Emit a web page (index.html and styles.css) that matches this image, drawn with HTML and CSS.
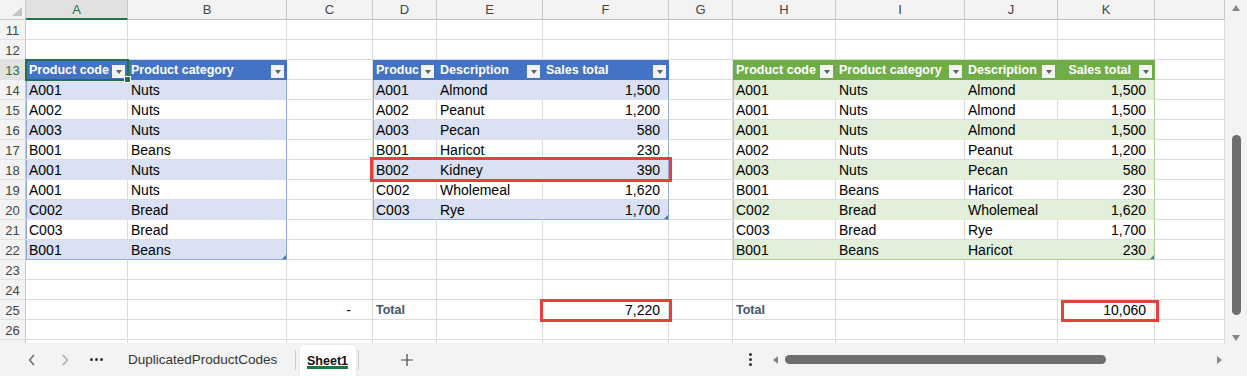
FILE: index.html
```html
<!DOCTYPE html>
<html lang="en">
<head>
  <meta charset="UTF-8" />
  <title>Sheet1 - Excel</title>
  <link rel="stylesheet" href="styles.css">
</head>
<body>
  <div class="app">
    <div class="main">
      <div class="sheet" id="sheet"></div>
      <div class="vscroll">
        <span class="arrow-up"></span>
        <span class="vthumb"></span>
        <span class="arrow-down"></span>
      </div>
    </div>

    <div class="tabbar">
      <span class="nav nav-prev"><svg width="8" height="12" viewBox="0 0 8 12"><path d="M6 1 1.5 6 6 11" /></svg></span>
      <span class="nav nav-next"><svg width="8" height="12" viewBox="0 0 8 12"><path d="M2 1 6.5 6 2 11" /></svg></span>
      <span class="more"><i></i><i></i><i></i></span>
      <span class="tab">DuplicatedProductCodes</span>
      <span class="tab-sep"></span>
      <span class="tab-active"><span class="tab-label">Sheet1</span><span class="tab-line"></span></span>
      <span class="tab-sep"></span>
      <span class="add"><svg width="12" height="12" viewBox="0 0 12 12"><path d="M6 0v12M0 6h12" /></svg></span>
      <span class="kebab"><i></i><i></i><i></i></span>
      <div class="hscroll">
        <span class="arrow-left"></span>
        <span class="hthumb"></span>
        <span class="arrow-right"></span>
      </div>
    </div>
  </div>

  <script>
    // column letters, index 0 is the row header column
    const letters = ['', 'A', 'B', 'C', 'D', 'E', 'F', 'G', 'H', 'I', 'J', 'K', ''];
    const firstRow = 11, lastRow = 27;

    const tables = [
      {
        tone: 'blue', col: 1,
        heads: ['Product code', 'Product category'],
        rows: [
          ['A001', 'Nuts'], ['A002', 'Nuts'], ['A003', 'Nuts'], ['B001', 'Beans'], ['A001', 'Nuts'],
          ['A001', 'Nuts'], ['C002', 'Bread'], ['C003', 'Bread'], ['B001', 'Beans']
        ]
      },
      {
        tone: 'blue', col: 4, numCol: 2,
        heads: ['Product code', 'Description', 'Sales total'],
        rows: [
          ['A001', 'Almond', '1,500'], ['A002', 'Peanut', '1,200'], ['A003', 'Pecan', '580'],
          ['B001', 'Haricot', '230'], ['B002', 'Kidney', '390'], ['C002', 'Wholemeal', '1,620'],
          ['C003', 'Rye', '1,700']
        ]
      },
      {
        tone: 'green', col: 8, numCol: 3, rightHead: 3,
        heads: ['Product code', 'Product category', 'Description', 'Sales total'],
        rows: [
          ['A001', 'Nuts', 'Almond', '1,500'], ['A001', 'Nuts', 'Almond', '1,500'],
          ['A001', 'Nuts', 'Almond', '1,500'], ['A002', 'Nuts', 'Peanut', '1,200'],
          ['A003', 'Nuts', 'Pecan', '580'], ['B001', 'Beans', 'Haricot', '230'],
          ['C002', 'Bread', 'Wholemeal', '1,620'], ['C003', 'Bread', 'Rye', '1,700'],
          ['B001', 'Beans', 'Haricot', '230']
        ]
      }
    ];

    const cells = {};
    function put(row, col, info) {
      cells[row + ':' + col] = info;
    }

    tables.forEach(t => {
      const lastCol = t.col + t.heads.length - 1;
      t.heads.forEach((h, i) => {
        put(13, t.col + i, { head: h, cls: t.tone + ' th' + (i === t.rightHead ? ' th-right' : '') });
      });
      t.rows.forEach((r, ri) => {
        r.forEach((v, i) => {
          const col = t.col + i;
          let cls = t.tone;
          if (ri % 2 === 0) cls += ' band';
          if (i === t.numCol) cls += ' num';
          if (i === 0) cls += ' edge-l';
          if (col === lastCol) cls += ' edge-r';
          if (ri === t.rows.length - 1) {
            cls += ' edge-b';
            if (col === lastCol) cls += ' rz';
          }
          put(14 + ri, col, { text: v, cls: cls });
        });
      });
    });

    // extras outside the tables
    cells['13:1'].cls += ' active';
    cells['18:4'].box = 'hl-row';
    put(25, 3, { text: '-', cls: 'dash' });
    put(25, 4, { text: 'Total', cls: 'total' });
    put(25, 6, { text: '7,220', cls: 'num', box: 'hl-f' });
    put(25, 8, { text: 'Total', cls: 'total' });
    put(25, 11, { text: '10,060', cls: 'num', box: 'hl-k' });

    const sheet = document.getElementById('sheet');

    letters.forEach((l, c) => {
      const d = document.createElement('div');
      d.className = c === 0 ? 'cell corner' : 'cell ch' + (c === 1 ? ' sel' : '');
      d.textContent = l;
      sheet.appendChild(d);
    });

    for (let r = firstRow; r <= lastRow; r++) {
      for (let c = 0; c < letters.length; c++) {
        const d = document.createElement('div');
        if (c === 0) {
          d.className = 'cell rh' + (r === 13 ? ' sel' : '');
          // last row is only a sliver, no label shows
          d.textContent = r < lastRow ? r : '';
        } else {
          const info = cells[r + ':' + c];
          d.className = 'cell' + (info ? ' ' + info.cls : '');
          if (info && info.head) {
            const txt = document.createElement('span');
            txt.className = 'txt';
            txt.textContent = info.head;
            const dd = document.createElement('span');
            dd.className = 'dd';
            d.append(txt, dd);
          } else if (info) {
            d.textContent = info.text;
          }
          if (info && info.box) {
            const b = document.createElement('span');
            b.className = 'hl ' + info.box;
            d.classList.add('boxed');
            d.appendChild(b);
          }
        }
        sheet.appendChild(d);
      }
    }
  </script>
</body>
</html>
```

FILE: styles.css
```css
body {
  margin: 0;
  font-family: "Liberation Sans", Arial, sans-serif;
  background-color: #fff;
  overflow: hidden;
}
.app {
  width: 1247px;
  height: 376px;
  display: flex;
  flex-direction: column;
}
.main {
  display: flex;
  height: 343px;
}

/* grid */
.sheet {
  width: 1225px;
  height: 343px;
  overflow: hidden;
  display: grid;
  grid-template-columns: 26px 102px 159px 86px 64px 106px 126px 64px 103px 129px 93px 97px 70px;
  grid-auto-rows: 20px;
}
.cell {
  position: relative;
  box-sizing: border-box;
  border-right: 1px solid #dcdcdc;
  border-bottom: 1px solid #dcdcdc;
  padding: 2px 3px 0;
  line-height: 17px;
  font-size: 14px;
  white-space: nowrap;
  color: #000;
}
.corner {
  background-color: #f3f3f3;
  border-right-color: #c8c8c8;
  border-bottom-color: #c8c8c8;
}
.corner::after {
  content: '';
  position: absolute;
  right: 3px;
  bottom: 3px;
  border-left: 10px solid transparent;
  border-bottom: 9px solid #c4c4c4;
}
.ch {
  background-color: #f3f3f3;
  border-right-color: #c8c8c8;
  border-bottom-color: #c2c2c2;
  text-align: center;
  font-size: 13px;
  line-height: 15px;
  color: #444;
}
.ch.sel {
  background-color: #e1e1e1;
  color: #217346;
  border-bottom: 2px solid #217346;
}
.rh {
  background-color: #f3f3f3;
  border-right-color: #c8c8c8;
  border-bottom-color: #e1e1e1;
  text-align: center;
  font-size: 13px;
  color: #444;
  padding: 2px 0 0;
}
.rh.sel {
  background-color: #e1e1e1;
  color: #217346;
}

/* tables */
.th {
  display: flex;
  align-items: flex-start;
  padding-right: 2px;
  font-weight: bold;
  font-size: 12.5px;
  color: #fff;
}
.th .txt {
  flex: 1;
  min-width: 0;
  overflow: hidden;
}
.th-right .txt {
  text-align: right;
  margin-right: 6px;
}
.dd {
  flex-shrink: 0;
  width: 13px;
  height: 13px;
  margin-top: 3px;
  margin-left: 2px;
  background-color: #f3f3f3;
  display: flex;
  align-items: center;
  justify-content: center;
}
.dd::after {
  content: '';
  border-left: 3.5px solid transparent;
  border-right: 3.5px solid transparent;
  border-top: 4px solid #5f5f5f;
}
.blue.th {
  background-color: #4472c4;
  border-right-color: #4472c4;
  border-bottom-color: #4472c4;
}
.green.th {
  background-color: #70ad47;
  border-right-color: #70ad47;
  border-bottom-color: #70ad47;
}
.blue.band {
  background-color: #d9e1f2;
  border-right-color: #d9e1f2;
  border-bottom-color: #d9e1f2;
}
.green.band {
  background-color: #e2efda;
  border-right-color: #e2efda;
  border-bottom-color: #e2efda;
}
.blue.edge-r { border-right-color: #8ea9db; }
.blue.edge-b { border-bottom-color: #8ea9db; }
.blue.edge-l { box-shadow: inset 1px 0 #8ea9db; }
.green.edge-r { border-right-color: #a9d08e; }
.green.edge-b { border-bottom-color: #a9d08e; }
.green.edge-l { box-shadow: inset 1px 0 #a9d08e; }
.rz::after {
  content: '';
  position: absolute;
  right: 0;
  bottom: 0;
  border-left: 4px solid transparent;
  border-bottom: 4px solid #4472c4;
}

.num {
  text-align: right;
  padding-right: 8px;
}
.dash {
  text-align: right;
  padding-right: 21px;
}
.total {
  font-weight: bold;
  font-size: 12.5px;
  color: #44546a;
}

/* selection and highlights */
.active {
  z-index: 2;
  outline: 2px solid #217346;
  outline-offset: -1px;
}
.active::after {
  content: '';
  position: absolute;
  right: -4px;
  bottom: -4px;
  width: 5px;
  height: 5px;
  background-color: #217346;
  border: 1px solid #fff;
}
.boxed {
  z-index: 3;
}
.hl {
  position: absolute;
  box-sizing: border-box;
  border: 3px solid #e5403b;
}
.hl-row {
  left: -3px;
  top: -3px;
  width: 302px;
  height: 25px;
}
.hl-f {
  left: -3px;
  top: -1px;
  width: 132px;
  height: 23px;
}
.hl-k {
  left: 3px;
  top: 0;
  width: 98px;
  height: 22px;
}

/* vertical scrollbar */
.vscroll {
  width: 22px;
  background-color: #f3f3f3;
  display: flex;
  flex-direction: column;
  align-items: center;
}
.arrow-up {
  margin-top: 5px;
  border-left: 4.5px solid transparent;
  border-right: 4.5px solid transparent;
  border-bottom: 6px solid #858585;
}
.vthumb {
  margin-top: 124px;
  width: 9px;
  height: 180px;
  border-radius: 5px;
  background-color: #6e6e6e;
}
.arrow-down {
  margin-top: 20px;
  border-left: 4.5px solid transparent;
  border-right: 4.5px solid transparent;
  border-top: 6px solid #858585;
}

/* sheet tabs */
.tabbar {
  height: 33px;
  background-color: #f3f3f3;
  display: flex;
  align-items: center;
  color: #333;
}
.nav {
  width: 16px;
  display: flex;
  justify-content: center;
}
.nav svg path {
  fill: none;
  stroke-width: 1.3;
}
.nav-prev {
  margin-left: 24px;
}
.nav-prev svg path {
  stroke: #5c5c5c;
}
.nav-next {
  margin-left: 17px;
}
.nav-next svg path {
  stroke: #a3a3a3;
}
.more {
  margin-left: 15px;
  width: 16px;
  display: flex;
  justify-content: center;
  gap: 2px;
}
.more i {
  width: 3px;
  height: 3px;
  border-radius: 50%;
  background-color: #333;
}
.tab {
  margin-left: 24px;
  width: 167px;
  font-size: 13.5px;
  line-height: 16px;
}
.tab-sep {
  width: 1px;
  height: 20px;
  background-color: #cdcdcd;
}
.tab-active {
  align-self: flex-end;
  margin-left: 4px;
  box-sizing: border-box;
  width: 56px;
  height: 31px;
  padding: 0 8px 0 7px;
  background-color: #fff;
  border-radius: 4px 4px 0 0;
  box-shadow: 0 0 2px rgba(0, 0, 0, 0.12);
  display: flex;
  flex-direction: column;
}
.tab-label {
  margin-top: 9px;
  line-height: 14px;
  font-size: 12.5px;
  font-weight: bold;
  color: #111;
}
.tab-line {
  margin-top: -2px;
  height: 3px;
  background-color: #107c41;
}
.tab-active + .tab-sep {
  margin-left: 2px;
}
.add {
  margin-left: 42px;
  display: flex;
}
.add svg path {
  stroke: #444;
  stroke-width: 1.2;
}
.kebab {
  margin-left: auto;
  width: 4px;
  display: flex;
  flex-direction: column;
  align-items: center;
  gap: 2px;
}
.kebab i {
  width: 3px;
  height: 3px;
  border-radius: 50%;
  background-color: #333;
}
.hscroll {
  margin-left: 16px;
  margin-right: 17px;
  width: 462px;
  display: flex;
  align-items: center;
}
.arrow-left {
  margin-left: 5px;
  border-top: 4px solid transparent;
  border-bottom: 4px solid transparent;
  border-right: 5px solid #858585;
}
.hthumb {
  margin-left: 7px;
  width: 321px;
  height: 9px;
  border-radius: 5px;
  background-color: #6e6e6e;
}
.arrow-right {
  margin-left: auto;
  margin-right: 8px;
  border-top: 4px solid transparent;
  border-bottom: 4px solid transparent;
  border-left: 5px solid #858585;
}
```
